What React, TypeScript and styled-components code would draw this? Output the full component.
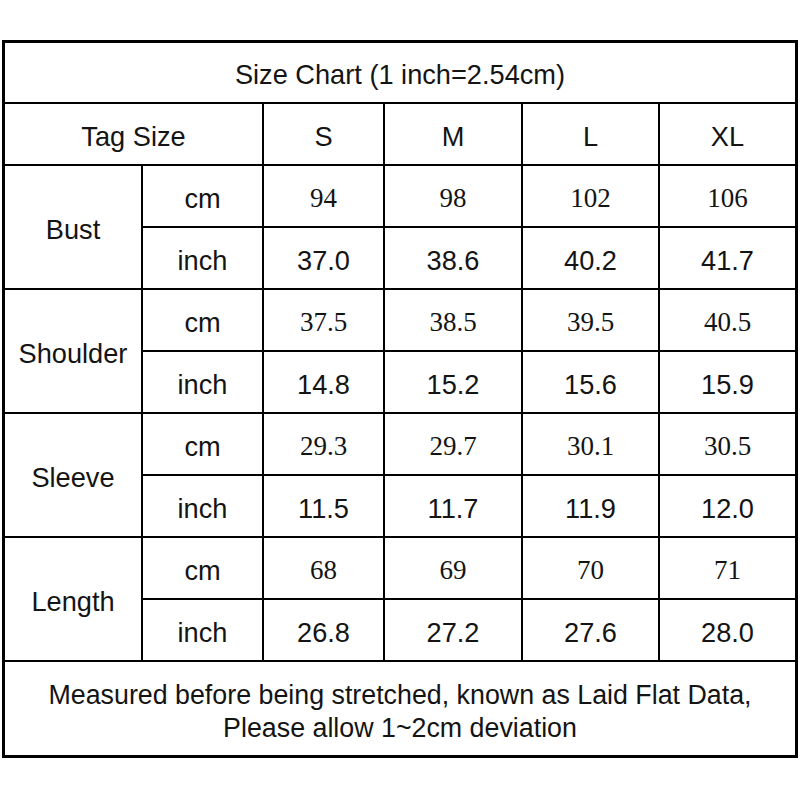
import React from "react";
import styled, { createGlobalStyle } from "styled-components";

const GlobalStyle = createGlobalStyle`
  html, body {
    margin: 0;
    padding: 0;
    background: #ffffff;
  }
  body {
    font-family: "Liberation Sans", Arial, sans-serif;
  }
`;

const Chart = styled.div`
  margin: 40px 0 0 2px;
  width: 796px;
  box-sizing: border-box;
  padding: 3px;
  background: #000000;
  display: grid;
  grid-template-columns: 136px 119px 119px 136px 135px 135px;
  grid-template-rows: 59px 60px repeat(8, 60px) 93px;
  gap: 2px;
`;

const Cell = styled.div<{ $span?: number; $rows?: number; $serif?: boolean }>`
  background: #ffffff;
  color: #141414;
  display: flex;
  align-items: center;
  justify-content: center;
  text-align: center;
  box-sizing: border-box;
  padding-top: 5px;
  font-family: ${(p) =>
    p.$serif
      ? '"Liberation Serif", "Times New Roman", serif'
      : '"Liberation Sans", Arial, sans-serif'};
  font-size: ${(p) => (p.$serif ? "27px" : "27.2px")};
  line-height: 1;
  grid-column: span ${(p) => p.$span ?? 1};
  grid-row: span ${(p) => p.$rows ?? 1};
`;

const Footer = styled(Cell)`
  flex-direction: column;
  line-height: 33px;
  padding-top: 6px;
  font-size: 26.8px;
`;

type Measure = { name: string; cm: string[]; inch: string[] };

const sizes = ["S", "M", "L", "XL"];

const measures: Measure[] = [
  { name: "Bust", cm: ["94", "98", "102", "106"], inch: ["37.0", "38.6", "40.2", "41.7"] },
  { name: "Shoulder", cm: ["37.5", "38.5", "39.5", "40.5"], inch: ["14.8", "15.2", "15.6", "15.9"] },
  { name: "Sleeve", cm: ["29.3", "29.7", "30.1", "30.5"], inch: ["11.5", "11.7", "11.9", "12.0"] },
  { name: "Length", cm: ["68", "69", "70", "71"], inch: ["26.8", "27.2", "27.6", "28.0"] },
];

export default function App() {
  return (
    <>
      <GlobalStyle />
      <Chart>
        <Cell $span={6}>Size Chart (1 inch=2.54cm)</Cell>
        <Cell $span={2}>Tag Size</Cell>
        {sizes.map((s) => (
          <Cell key={s}>{s}</Cell>
        ))}
        {measures.map((m) => (
          <React.Fragment key={m.name}>
            <Cell $rows={2}>{m.name}</Cell>
            <Cell>cm</Cell>
            {m.cm.map((v, i) => (
              <Cell key={"c" + i} $serif>
                {v}
              </Cell>
            ))}
            <Cell>inch</Cell>
            {m.inch.map((v, i) => (
              <Cell key={"i" + i}>{v}</Cell>
            ))}
          </React.Fragment>
        ))}
        <Footer $span={6}>
          <span>Measured before being stretched, known as Laid Flat Data,</span>
          <span>Please allow 1~2cm deviation</span>
        </Footer>
      </Chart>
    </>
  );
}
